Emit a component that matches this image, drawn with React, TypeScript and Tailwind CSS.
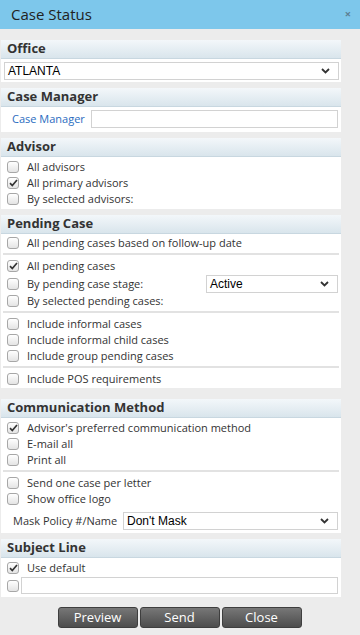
import React from 'react';

const font = { fontFamily: '"Open Sans", "Liberation Sans", sans-serif' };

function Chevron() {
  return (
    <svg width="9" height="6" viewBox="0 0 9 6" className="shrink-0">
      <path d="M1 1l3.5 3.5L8 1" fill="none" stroke="#333" strokeWidth="1.8" />
    </svg>
  );
}

function Check({ checked }: { checked?: boolean }) {
  return (
    <span className="relative flex h-[12px] w-[12px] shrink-0 items-center justify-center rounded-[3px] border border-[#a7a7a7] bg-gradient-to-b from-white to-[#e4e4e4]">
      {checked && (
        <svg width="9" height="8" viewBox="0 0 9 8">
          <path d="M1 4.2l2.3 2.4L8 1" fill="none" stroke="#333" strokeWidth="1.7" />
        </svg>
      )}
    </span>
  );
}

function Row({ label, checked }: { label: string; checked?: boolean }) {
  return (
    <div className="flex h-[16px] items-center pl-[6px] pr-[3px]">
      <Check checked={checked} />
      <span className="ml-[8px] text-[11px] text-[#333]">{label}</span>
    </div>
  );
}

function Select({ value, className }: { value: string; className?: string }) {
  return (
    <div
      className={`flex h-[18px] items-center justify-between border border-[#d2d2d2] bg-white pl-[3px] pr-[8px] text-[12px] text-black ${className ?? ''}`}
      style={{ fontFamily: '"Liberation Sans", Arial, sans-serif' }}
    >
      <span>{value}</span>
      <Chevron />
    </div>
  );
}

function Divider() {
  return <div className="mx-[2px] mb-[3px] mt-[2px] h-[2px] bg-[#e2e2e2]" />;
}

function Panel({ title, children, className }: { title: string; children: React.ReactNode; className?: string }) {
  return (
    <div className={`ml-[1px] w-[340px] bg-white ${className ?? ''}`}>
      <div className="flex h-[19px] items-center border-b border-[#c8d7e0] bg-gradient-to-b from-[#f3f7fa] to-[#d9e5ec] pl-[6px] text-[13px] font-bold text-[#333]">
        {title}
      </div>
      {children}
    </div>
  );
}

export default function App() {
  return (
    <div className="flex h-[635px] w-[360px] flex-col bg-[#ececec]" style={font}>
      <div className="flex h-[29px] items-center justify-between bg-[#7dc7eb] pl-[11px] pr-[9px]">
        <span className="text-[15px] text-[#222]">Case Status</span>
        <span className="text-[11px] font-bold text-[#5c7f92]">×</span>
      </div>

      <div className="mt-[11px] flex flex-col">
        <Panel title="Office" className="pb-[2px]">
          <div className="px-[3px] pt-[3px]">
            <Select value="ATLANTA" className="w-[335px]" />
          </div>
        </Panel>

        <Panel title="Case Manager" className="mt-[6px] pb-[4px]">
          <div className="flex h-[18px] items-center pr-[3px] mt-[3px]">
            <span className="ml-[11px] w-[79px] text-[11px] text-[#2a6cc0]">Case Manager</span>
            <div className="h-[18px] flex-1 border border-[#d2d2d2] bg-white" />
          </div>
        </Panel>

        <Panel title="Advisor" className="mt-[6px] pb-[2px]">
          <div className="pt-[2px]">
            <Row label="All advisors" />
            <Row label="All primary advisors" checked />
            <Row label="By selected advisors:" />
          </div>
        </Panel>

        <Panel title="Pending Case" className="mt-[6px] pb-[1px]">
          <div className="pt-[1px]">
            <Row label="All pending cases based on follow-up date" />
            <Divider />
            <Row label="All pending cases" checked />
            <div className="mt-[1px] flex h-[18px] items-center pl-[6px] pr-[3px]">
              <Check />
              <span className="ml-[8px] flex-1 text-[11px] text-[#333]">By pending case stage:</span>
              <Select value="Active" className="w-[132px]" />
            </div>
            <Row label="By selected pending cases:" />
            <Divider />
            <Row label="Include informal cases" />
            <Row label="Include informal child cases" />
            <Row label="Include group pending cases" />
            <Divider />
            <Row label="Include POS requirements" />
          </div>
        </Panel>

        <Panel title="Communication Method" className="mt-[11px] pb-[3px]">
          <div className="pt-[2px]">
            <Row label="Advisor's preferred communication method" checked />
            <Row label="E-mail all" />
            <Row label="Print all" />
            <Divider />
            <Row label="Send one case per letter" />
            <Row label="Show office logo" />
            <div className="mt-[5px] flex items-center pr-[3px]">
              <span className="ml-[12px] w-[110px] text-[11px] text-[#333]">Mask Policy #/Name</span>
              <Select value="Don't Mask" className="flex-1" />
            </div>
          </div>
        </Panel>

        <Panel title="Subject Line" className="mt-[6px] pb-[3px]">
          <div className="pt-[2px]">
            <Row label="Use default" checked />
            <div className="mt-[1px] flex items-center pl-[6px] pr-[3px]">
              <Check />
              <div className="ml-[2px] h-[17px] flex-1 border border-[#d2d2d2] bg-white" />
            </div>
          </div>
        </Panel>
      </div>

      <div className="mt-[10px] flex justify-center gap-[2px] pr-[1px]">
        {['Preview', 'Send', 'Close'].map((b) => (
          <button
            key={b}
            className="h-[21px] w-[80px] rounded-[3px] border border-[#3e3e3e] bg-gradient-to-b from-[#777] to-[#4d4d4d] text-[13px] text-white"
          >
            {b}
          </button>
        ))}
      </div>
    </div>
  );
}
